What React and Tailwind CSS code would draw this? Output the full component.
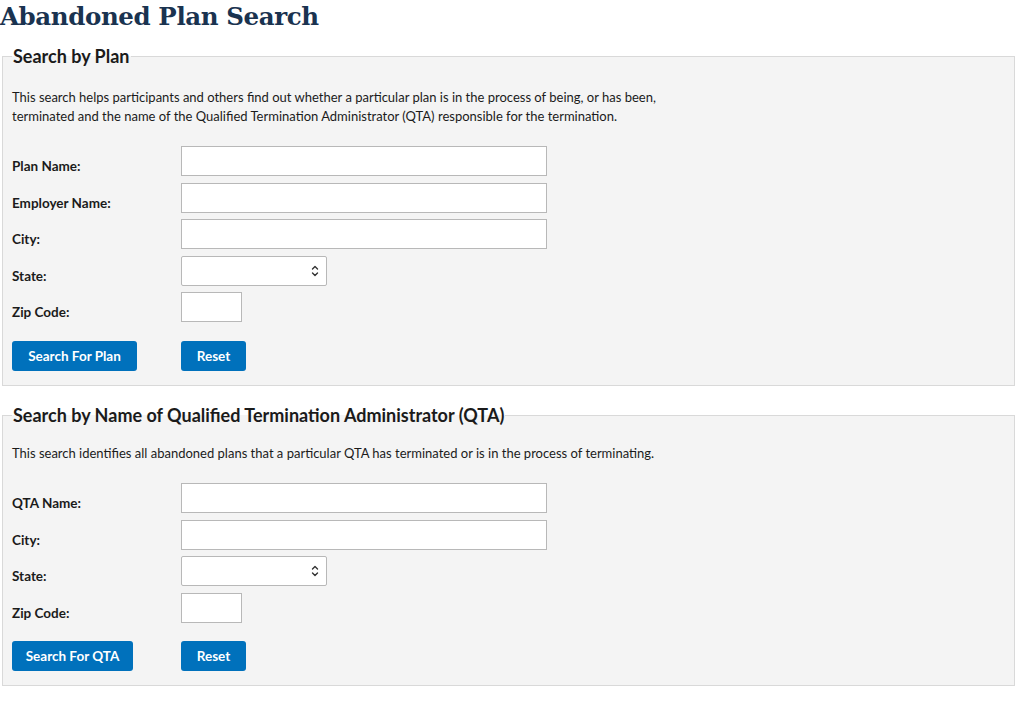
import React from "react";

const sans = { fontFamily: "Lato, 'Noto Sans', sans-serif" };

const TextRow = ({ label, width = "w-[366px]" }) => (
  <div className="flex items-end">
    <label className="w-[169px] shrink-0 text-[13.5px] leading-[19px] font-bold text-[#1b1b1b]">
      {label}
    </label>
    <input
      type="text"
      className={`${width} h-[30px] border border-[#b8b8b8] bg-white outline-none`}
    />
  </div>
);

const SelectRow = ({ label }) => (
  <div className="flex items-end">
    <label className="w-[169px] shrink-0 text-[13.5px] leading-[19px] font-bold text-[#1b1b1b]">
      {label}
    </label>
    <div className="relative w-[146px] h-[30px] border border-[#b8b8b8] bg-white rounded-[2px]">
      <select className="w-full h-full appearance-none bg-transparent outline-none" />
      <svg
        className="absolute right-[7px] top-[8px] w-[8px] h-[12px] pointer-events-none"
        viewBox="0 0 8 12"
        fill="none"
        stroke="#333"
        strokeWidth="1.4"
        strokeLinecap="round"
        strokeLinejoin="round"
      >
        <path d="M1.5 4 L4 1.5 L6.5 4" />
        <path d="M1.5 8 L4 10.5 L6.5 8" />
      </svg>
    </div>
  </div>
);

const Button = ({ children, className = "" }) => (
  <button
    className={`h-[30px] rounded-[3px] bg-[#0071bc] text-white text-[13.5px] font-bold ${className}`}
  >
    {children}
  </button>
);

const Section = ({ title, children, description, searchLabel, searchWidth, descMt, btnMt }) => (
  <fieldset className="border border-[#d9d9d9] bg-[#f4f4f4] mx-[2px] w-[1013px] px-[9px] pb-[14px]">
    <legend className="px-[1px] text-[18px] leading-[22px] font-bold text-[#1b1b1b]">
      {title}
    </legend>
    <p className={`${descMt} text-[13px] leading-[19px] text-[#1b1b1b]`}>{description}</p>
    <div className="mt-[20px] flex flex-col gap-[6.5px]">{children}</div>
    <div className={`${btnMt} flex`}>
      <div className="w-[169px] shrink-0">
        <Button className={searchWidth}>{searchLabel}</Button>
      </div>
      <Button className="w-[65px]">Reset</Button>
    </div>
  </fieldset>
);

export default function App() {
  return (
    <div className="bg-white min-h-[710px] w-[1024px]" style={sans}>
      <h1
        className="text-[24.5px] leading-[34px] font-bold text-[#1a3350] tracking-[-0.4px]"
        style={{ fontFamily: "'DejaVu Serif', serif" }}
      >
        Abandoned Plan Search
      </h1>
      <div className="mt-[11px]">
        <Section
          title="Search by Plan"
          description={
            <>
              This search helps participants and others find out whether a particular plan is in the
              process of being, or has been,
              <br />
              terminated and the name of the Qualified Termination Administrator (QTA) responsible for
              the termination.
            </>
          }
          searchLabel="Search For Plan"
          searchWidth="w-[125px]"
          descMt="mt-[21px]"
          btnMt="mt-[19px]"
        >
          <TextRow label="Plan Name:" />
          <TextRow label="Employer Name:" />
          <TextRow label="City:" />
          <SelectRow label="State:" />
          <TextRow label="Zip Code:" width="w-[61px]" />
        </Section>
      </div>
      <div className="mt-[18px]">
        <Section
          title="Search by Name of Qualified Termination Administrator (QTA)"
          description="This search identifies all abandoned plans that a particular QTA has terminated or is in the process of terminating."
          searchLabel="Search For QTA"
          searchWidth="w-[121px]"
          descMt="mt-[18px]"
          btnMt="mt-[18.5px]"
        >
          <TextRow label="QTA Name:" />
          <TextRow label="City:" />
          <SelectRow label="State:" />
          <TextRow label="Zip Code:" width="w-[61px]" />
        </Section>
      </div>
    </div>
  );
}
